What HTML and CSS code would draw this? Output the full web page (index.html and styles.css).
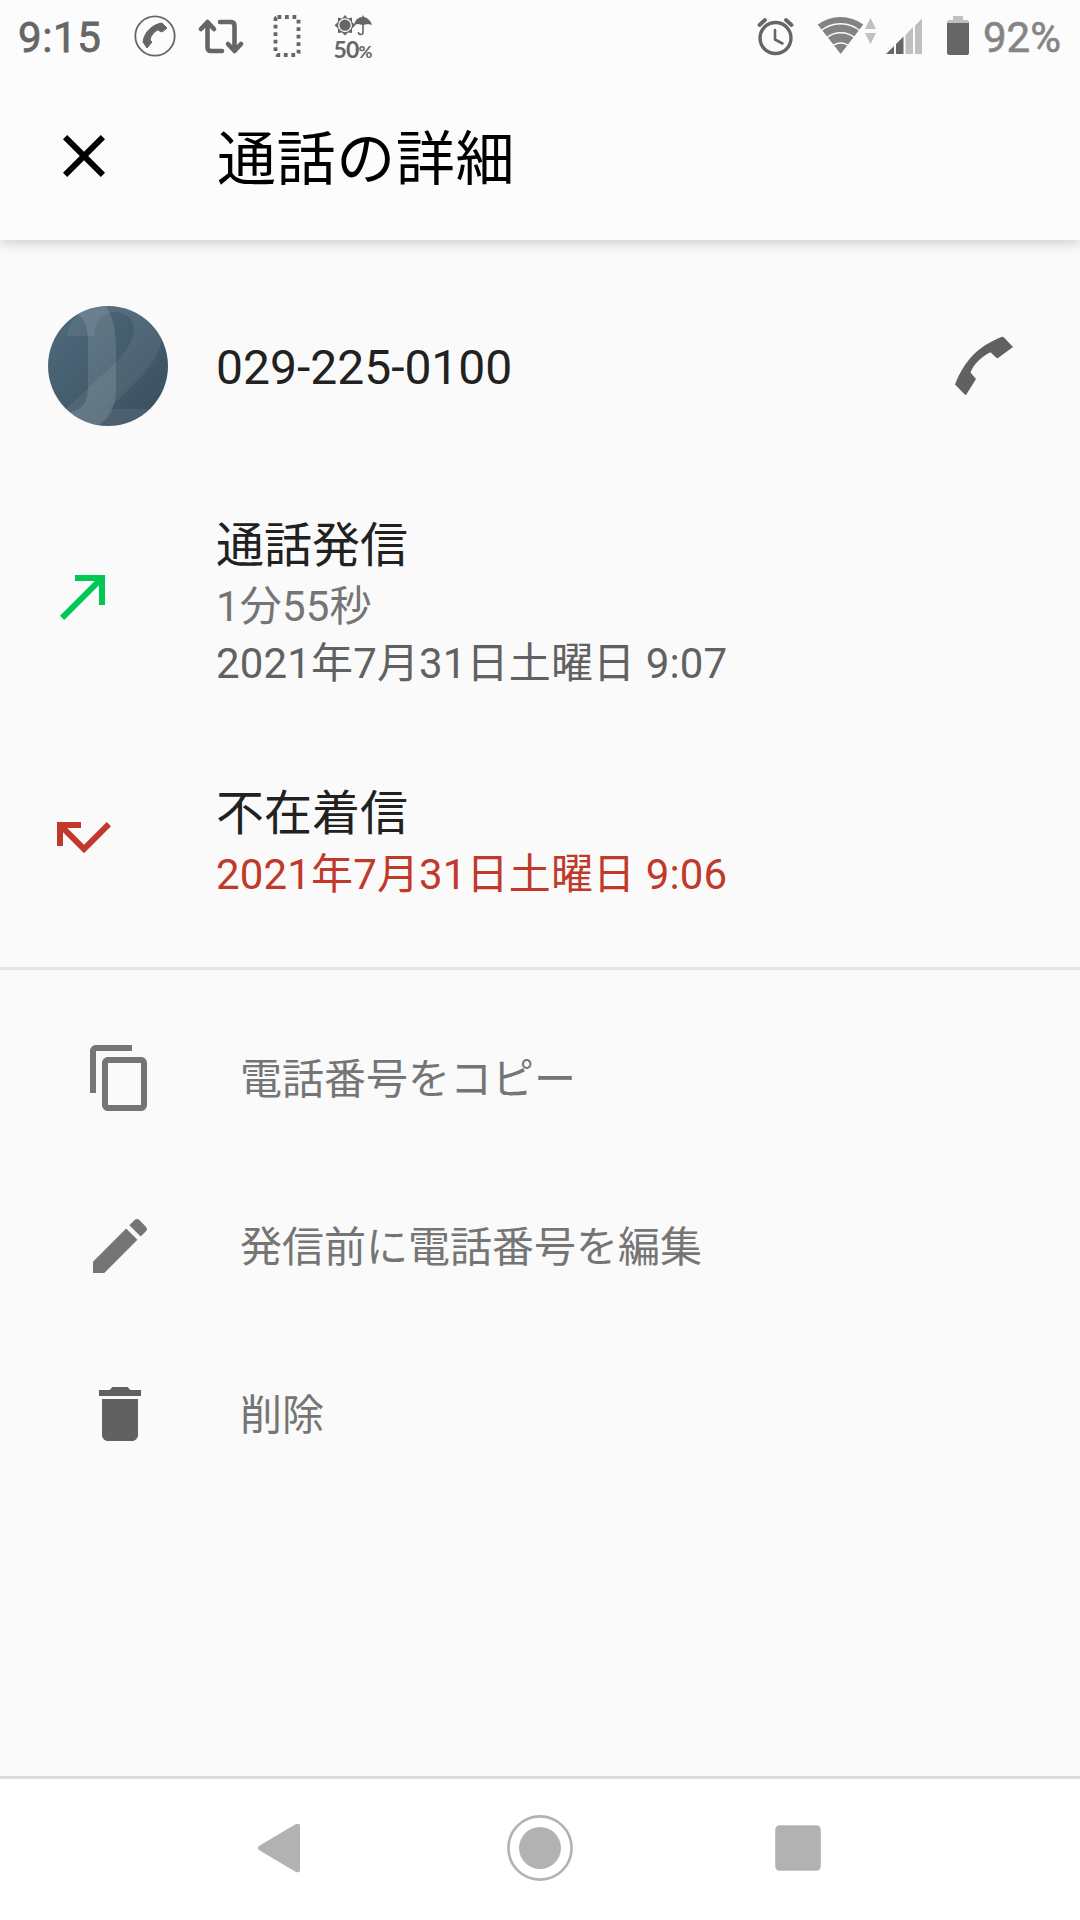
FILE: index.html
```html
<!doctype html>
<html lang="ja">
  <head>
    <meta charset="UTF-8" />
    <meta name="viewport" content="width=device-width, initial-scale=1.0" />
    <title>通話の詳細</title>
    <link rel="stylesheet" href="styles.css">
  </head>
  <body>
    <div class="screen">
      <div class="status-bar">
        <span class="clock">9:15</span>
        <svg class="status-left" width="250" height="72" viewBox="130 0 250 72">
          <!-- 通話中 -->
          <circle cx="155" cy="36" r="19.7" fill="none" stroke="#666" stroke-width="1.8" />
          <path d="M143 42C144 32 153 24 162 23L167 28 162 32 157.500 30C154 32 151 35 150 40L152 42 147 48Z" fill="#666" stroke="#666" stroke-width="1" stroke-linejoin="round" />
          <!-- リツイート -->
          <g fill="none" stroke="#666" stroke-width="4.600" stroke-linecap="round" stroke-linejoin="round">
            <path d="M222 51H211Q207.500 51 207.500 47V23M201 29L207.500 22 214 29" />
            <path d="M220 22H231Q234.500 22 234.500 26V50M228 44L234.500 51 241 44" />
          </g>
          <rect x="275.500" y="17" width="23" height="38" rx="2" fill="none" stroke="#666" stroke-width="3.800" stroke-dasharray="3.800 3.700" />
          <!-- 天気 -->
          <path d="M345 15L348 18.500 352 17.500V22L355.500 25.300 352 28.500V33L348 32.500 345 35.500 342 32.500 338 33V28.500L334.500 25.300 338 22V17.500L342 18.500Z" fill="#666" />
          <circle cx="345" cy="25.200" r="6.300" fill="#666" stroke="#fcfcfc" stroke-width="1.300" />
          <path d="M354 25C355 20 358 17.500 362 17L363 15 364 17C368 18 371 21 372 25L368 24 363 25 358 24Z" fill="#666" />
          <path d="M363 24V32Q363 34.500 360.700 34.500T358.500 32" fill="none" stroke="#666" stroke-width="1.600" />
          <text class="rain" x="333.500" y="57.500">50<tspan class="rain-unit">%</tspan></text>
        </svg>
        <svg class="status-right" width="220" height="72" viewBox="755 0 220 72">
          <!-- アラーム -->
          <g fill="none" stroke="#666" stroke-linecap="round">
            <circle cx="775.500" cy="38" r="15.500" stroke-width="3.400" />
            <path d="M775 30V39.500L782.500 43.500" stroke-width="2.600" stroke-linejoin="round" />
            <path d="M759.500 25L765 20M791.500 25L786 20" stroke-width="3.800" />
          </g>
          <!-- Wi-Fi -->
          <path d="M840.700 54L817.700 24.500A38 38 0 0 1 863.300 24.500Z" fill="#838383" />
          <g fill="none" stroke="#fcfcfc" stroke-width="1.500">
            <path d="M820 31.500A31 31 0 0 1 861 31.500" />
            <path d="M826 38.500A22 22 0 0 1 855.500 38.500" />
            <path d="M832 46.500A13 13 0 0 1 849.500 46.500" />
          </g>
          <path d="M865 29L870.500 18 876 29ZM865 33H876L870.500 44Z" fill="#c0c0c0" />
          <!-- 電波 -->
          <path d="M886 54L894 46V54ZM896 44L903.500 36.500V54H896Z" fill="#666" />
          <path d="M905.500 35L913 27V54H905.500ZM915 25.500L922 18.500V54H915Z" fill="#c0c0c0" />
          <!-- 電池 -->
          <path d="M953 16H963V20H967Q969 20 969 22V24H947V22Q947 20 949 20H953Z" fill="#c0c0c0" />
          <path d="M947 23H969V53Q969 55 967 55H949Q947 55 947 53Z" fill="#666" />
        </svg>
        <span class="battery">92%</span>
      </div>

      <div class="toolbar">
        <svg class="icon" viewBox="0 0 24 24" fill="#000">
          <path d="M19 6.400L17.600 5 12 10.600 6.400 5 5 6.400 10.600 12 5 17.600 6.400 19 12 13.400 17.600 19 19 17.600 13.400 12z" />
        </svg>
        <h1>通話の詳細</h1>
      </div>

      <div class="contact">
        <svg class="avatar" viewBox="0 0 120 120">
          <defs>
            <linearGradient id="avatarBg" x1="0" y1="0" x2="1" y2="1">
              <stop offset="0" stop-color="#4f6b7d" />
              <stop offset="1" stop-color="#394e5d" />
            </linearGradient>
            <clipPath id="avatarClip"><circle cx="60" cy="60" r="60" /></clipPath>
          </defs>
          <g clip-path="url(#avatarClip)">
            <rect width="120" height="120" fill="url(#avatarBg)" />
            <path d="M0 0H58C65 12 68 25 68 40V84C68 100 61 113 50 120H30L22 106C35 104 40 96 40 80V36C40 22 37 14 30 8Z" fill="#fff" opacity=".12" />
            <path d="M19 30C20 18 26 11 34 6L60 0C90 2 113 15 113 34C112 56 84 80 61 103H120V120H10V110L66 58C80 44 86 33 86 23C86 12 77 6 66 6C53 7 46 16 46 30Z" fill="#fff" opacity=".07" />
          </g>
        </svg>
        <span class="number">029-225-0100</span>
        <svg class="call" viewBox="0 0 110 110">
          <path d="M25 73.500C35 48 49 35 72 25.700Q73 25.500 74 26.500L83 36 68 47Q67 47.500 66 46.500L60.500 41.300C51 46 44 53 40.500 61.500L46 68 36.500 83.300Q35.500 84.500 34.500 83.300Z" fill="#616161" />
        </svg>
      </div>

      <div class="history">
        <div class="entry outgoing">
          <svg class="icon" viewBox="0 0 24 24" fill="#00c853">
            <path d="M9 5v2h6.590L4 18.590 5.410 20 17 8.410V15h2V5z" />
          </svg>
          <div class="entry-text">
            <p class="type">通話発信</p>
            <p class="duration">1分55秒</p>
            <p class="date">2021年7月31日土曜日 9:07</p>
          </div>
        </div>
        <div class="entry missed">
          <svg class="icon" viewBox="0 0 24 24" fill="#c0392b">
            <path d="M19.590 7L12 14.590 6.410 9H11V7H3v8h2v-4.590l7 7 9-9z" />
          </svg>
          <div class="entry-text">
            <p class="type">不在着信</p>
            <p class="date">2021年7月31日土曜日 9:06</p>
          </div>
        </div>
      </div>

      <div class="menu">
        <div class="menu-item">
          <svg class="icon" viewBox="0 0 24 24" fill="#757575">
            <path d="M16 1H4c-1.100 0-2 .9-2 2v14h2V3h12V1zm3 4H8c-1.100 0-2 .9-2 2v14c0 1.100.9 2 2 2h11c1.100 0 2-.9 2-2V7c0-1.100-.9-2-2-2zm0 16H8V7h11v14z" />
          </svg>
          <span>電話番号をコピー</span>
        </div>
        <div class="menu-item">
          <svg class="icon" viewBox="0 0 24 24" fill="#757575">
            <path d="M3 17.250V21h3.750L17.810 9.940l-3.750-3.750L3 17.250zM20.710 7.040c.39-.39.39-1.020 0-1.410l-2.340-2.340c-.39-.39-1.020-.39-1.410 0l-1.830 1.830 3.750 3.750 1.830-1.830z" />
          </svg>
          <span>発信前に電話番号を編集</span>
        </div>
        <div class="menu-item">
          <svg class="icon" viewBox="0 0 24 24" fill="#616161">
            <path d="M6 19c0 1.100.9 2 2 2h8c1.100 0 2-.9 2-2V7H6v12zM19 4h-3.500l-1-1h-5l-1 1H5v2h14V4z" />
          </svg>
          <span>削除</span>
        </div>
      </div>

      <div class="nav-bar">
        <svg width="66" height="66" viewBox="0 0 66 66">
          <path d="M9.500 31.300L46.500 9.300Q51 7.500 51 11V55Q51 58.500 46.500 56.700L9.500 34.700Q8 33 9.500 31.300Z" fill="#b2b2b2" />
        </svg>
        <svg width="66" height="66" viewBox="0 0 66 66">
          <circle cx="33" cy="33" r="31.600" fill="none" stroke="#b2b2b2" stroke-width="2.600" />
          <circle cx="33" cy="33" r="21" fill="#b2b2b2" />
        </svg>
        <svg width="66" height="66" viewBox="0 0 66 66">
          <rect x="10.200" y="10.200" width="45.600" height="45.600" rx="4.500" fill="#b2b2b2" />
        </svg>
      </div>
    </div>
  </body>
</html>
```
FILE: styles.css
```css
body {
  margin: 0;
  background-color: #fafafa;
  font-family: Roboto, "Noto Sans CJK JP", sans-serif;
}

.screen {
  display: flex;
  flex-direction: column;
  height: 1920px;
  width: 1080px;
  overflow: hidden;
}

svg {
  display: block;
  flex-shrink: 0;
}

h1,
p {
  margin: 0;
  font-weight: 400;
}

.icon {
  width: 72px;
  height: 72px;
}

.status-bar {
  position: relative;
  z-index: 1;
  display: flex;
  align-items: center;
  box-sizing: border-box;
  height: 72px;
  padding-left: 18px;
  background-color: #fcfcfc;
  color: #666;
  font-size: 42px;
}

.clock {
  width: 112px;
  padding-top: 3px;
  letter-spacing: 0.6px;
  -webkit-text-stroke: 0.8px #666;
}

.status-right {
  margin-left: 375px;
}

.rain {
  font-family: Lato, sans-serif;
  font-weight: 700;
  font-size: 23px;
  letter-spacing: -0.8px;
  fill: #666;
}

.rain-unit {
  font-size: 17px;
}

.battery {
  margin-left: 8px;
  padding-top: 3px;
  color: #858585;
  -webkit-text-stroke: 0.6px #858585;
}

.toolbar {
  display: flex;
  align-items: center;
  height: 168px;
  padding: 0 48px;
  gap: 97px;
  background-color: #fcfcfc;
  box-shadow: 0 3px 12px rgba(0, 0, 0, 0.18);
}

.toolbar h1 {
  padding-top: 7px;
  font-size: 59px;
  line-height: 84px;
  letter-spacing: 0.6px;
  color: #000;
}

.contact {
  display: flex;
  align-items: center;
  height: 252px;
  padding: 0 40px 0 48px;
}

.avatar {
  width: 120px;
  height: 120px;
}

.number {
  flex: 1;
  margin-left: 48px;
  padding-top: 2px;
  font-size: 48px;
  color: #212121;
}

.call {
  width: 110px;
  height: 110px;
}

.history {
  height: 475px;
  border-bottom: 3px solid #e6e6e6;
}

.entry {
  display: flex;
  padding: 22px 48px 0;
  gap: 96px;
}

.entry .icon {
  margin-top: 46px;
}

.missed {
  padding-top: 90px;
}

.missed .icon {
  margin-top: 19px;
}

.type {
  font-size: 48px;
  line-height: 64px;
  color: #212121;
}

.duration,
.date {
  font-size: 42px;
  line-height: 57px;
  letter-spacing: 0.15px;
}

.duration {
  color: #757575;
}

.date {
  color: #616161;
}

.missed .date {
  color: #c0392b;
}

.menu {
  flex: 1;
  padding-top: 24px;
}

.menu-item {
  display: flex;
  align-items: center;
  height: 168px;
  padding-left: 84px;
  gap: 84px;
  font-size: 42px;
  color: #757575;
}

.menu-item span {
  padding-bottom: 5px;
}

.nav-bar {
  display: flex;
  justify-content: center;
  gap: 192px;
  height: 99px;
  padding-top: 36px;
  padding-bottom: 6px;
  border-top: 3px solid #dcdcdc;
  background-color: #fff;
}
```
